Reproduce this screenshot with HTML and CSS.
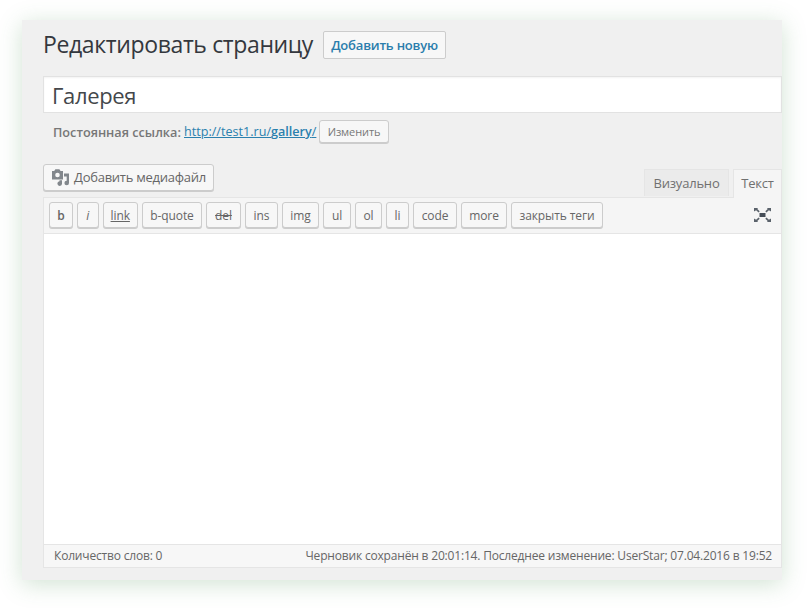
FILE: index.html
```html
<!DOCTYPE html>
<html lang="ru">
<head>
<meta charset="utf-8">
<title>Редактировать страницу</title>
<link rel="stylesheet" href="styles.css">
</head>
<body>
<main class="panel">
  <header class="heading">
    <h1>Редактировать страницу</h1>
    <a class="add-new">Добавить новую</a>
  </header>
  <div class="title-field">Галерея</div>
  <div class="permalink">
    <strong>Постоянная ссылка:</strong>
    <a class="url">http://test1.ru/<b>gallery</b>/</a>
    <button class="btn change">Изменить</button>
  </div>
  <div class="tools">
    <button class="btn media">
      <svg width="18" height="17" viewBox="0 0 18 17" fill="#82878c">
        <path fill-rule="evenodd" d="M0 2h2.200L3.400.3h4L8.600 2H11v8.500H0zM5.500 3.700a2.300 2.300 0 1 0 0 4.600a2.300 2.300 0 1 0 0-4.600z"/>
        <path d="M12 4.500h5V14a2.300 2.300 0 1 1-2.300-2.300V7.500H12z"/>
        <path d="M7.500 11.300H10v3.200a2.300 2.300 0 1 1-2.500-2.200z"/>
      </svg>
      <span>Добавить медиафайл</span>
    </button>
    <div class="tabs">
      <span class="tab visual">Визуально</span>
      <span class="tab active">Текст</span>
    </div>
  </div>
  <section class="editor">
    <div class="toolbar">
      <button class="btn w-b"><b>b</b></button>
      <button class="btn w-i"><i>i</i></button>
      <button class="btn w-link"><u>link</u></button>
      <button class="btn w-quote">b-quote</button>
      <button class="btn w-del"><s>del</s></button>
      <button class="btn w-ins">ins</button>
      <button class="btn w-img">img</button>
      <button class="btn w-ul">ul</button>
      <button class="btn w-ol">ol</button>
      <button class="btn w-li">li</button>
      <button class="btn w-code">code</button>
      <button class="btn w-more">more</button>
      <button class="btn w-close">закрыть теги</button>
      <svg class="expand" width="17" height="14" viewBox="0 0 17 14" fill="#5a626b">
        <path fill="#464e58" d="M5.500 5h6v4h-6z"/>
        <path d="M0 0h4L3.300 1.100l2.400 2.200-1.100 1.100-2.500-2.100L0 3.500zM17 0h-4l.7 1.100-2.400 2.200 1.100 1.100 2.500-2.100L17 3.500zM0 14h4l-.7-1.100 2.400-2.200-1.100-1.100-2.500 2.100L0 10.500zM17 14h-4l.7-1.100-2.400-2.200 1.100-1.100 2.500 2.100 2.100-1.200z"/>
      </svg>
    </div>
    <div class="content"></div>
    <footer class="status">
      <span class="count">Количество слов: 0</span>
      <span class="saved">Черновик сохранён в 20:01:14. Последнее изменение: UserStar; 07.04.2016 в 19:52</span>
    </footer>
  </section>
</main>
</body>
</html>
```
FILE: styles.css
```css
* { box-sizing: border-box; }
body {
  margin: 0;
  padding: 20px 26px 28px 22px;
  background: #fff;
  font: 12px "Open Sans", "Noto Sans", sans-serif;
  color: #666;
  white-space: nowrap;
}
.panel {
  width: 760px;
  height: 560px;
  padding: 0 0 0 21px;
  background: #f0f0f0;
  box-shadow: 0 4px 22px rgba(70, 145, 80, .25);
}
.heading { display: flex; height: 56px; padding-top: 11px; }
h1 {
  width: 280px;
  margin: 0;
  font-size: 23px;
  font-weight: 400;
  line-height: 27px;
  letter-spacing: -.37px;
  color: #34383e;
}
.add-new {
  width: 123px;
  height: 28px;
  border: 1px solid #ccc;
  border-radius: 2px;
  background: #f7f7f7;
  font-size: 13px;
  font-weight: 600;
  line-height: 27px;
  letter-spacing: -.2px;
  text-align: center;
  color: #2a7dac;
}
.title-field {
  height: 37px;
  padding-left: 8px;
  border: 1px solid #e2e2e2;
  background: #fff;
  box-shadow: inset 0 1px 2px rgba(0, 0, 0, .05);
  font-size: 22px;
  line-height: 36px;
  letter-spacing: -.35px;
  color: #44474b;
}
.permalink { display: flex; height: 50px; padding: 7px 0 0 10px; line-height: 24px; }
.permalink strong { width: 131px; font-size: 12.7px; font-weight: 600; color: #777; }
.url { width: 135px; font-size: 12.6px; color: #2a80ae; text-decoration: underline; }
.url b { font-weight: 600; }
.btn {
  height: 26px;
  padding: 0;
  border: 1px solid #ccc;
  border-radius: 3px;
  background: #f7f7f7;
  box-shadow: 0 1px 0 #ccc;
  font: 12px/23px "Open Sans", "Noto Sans", sans-serif;
  letter-spacing: -.1px;
  color: #666;
  text-align: center;
}
.change { width: 70px; height: 23px; font-size: 11px; line-height: 21px; color: #777; }
.tools { display: flex; justify-content: space-between; height: 34px; }
.media { display: flex; align-items: center; width: 171px; height: 27px; margin-top: 1px; padding-left: 8px; gap: 4px; font-size: 13px; letter-spacing: -.26px; }
.tabs { display: flex; align-items: flex-start; margin-top: 6px; gap: 4px; }
.tab { height: 27px; border: 1px solid #e5e5e5; border-bottom: 0; font-size: 13px; line-height: 27px; letter-spacing: -.2px; text-align: center; color: #707070; }
.visual { width: 85px; background: #ebebeb; }
.active { position: relative; width: 49px; height: 29px; background: #f5f5f5; }
.editor { height: 371px; border: 1px solid #e5e5e5; background: #fff; }
.toolbar { display: flex; align-items: flex-start; gap: 4px; height: 36px; padding: 4px 0 0 5px; border-bottom: 1px solid #e5e5e5; background: #f5f5f5; }
.w-b { width: 24px; }
.w-b b { font-weight: 600; }
.w-i { width: 21.5px; }
.w-link { width: 35.500px; }
.w-quote { width: 60px; }
.w-del { width: 35px; }
.w-ins { width: 33px; }
.w-img { width: 37px; }
.w-ul { width: 28px; }
.w-ol { width: 27px; }
.w-li { width: 23px; }
.w-code { width: 44px; }
.w-more { width: 46px; }
.w-close { width: 92px; }
.expand { margin: 6px 10px 0 auto; }
.content { height: 310px; }
.status { display: flex; justify-content: space-between; height: 23px; padding: 0 9px 0 10px; border-top: 1px solid #e5e5e5; background: #f7f7f7; line-height: 22px; letter-spacing: -.18px; }
```
